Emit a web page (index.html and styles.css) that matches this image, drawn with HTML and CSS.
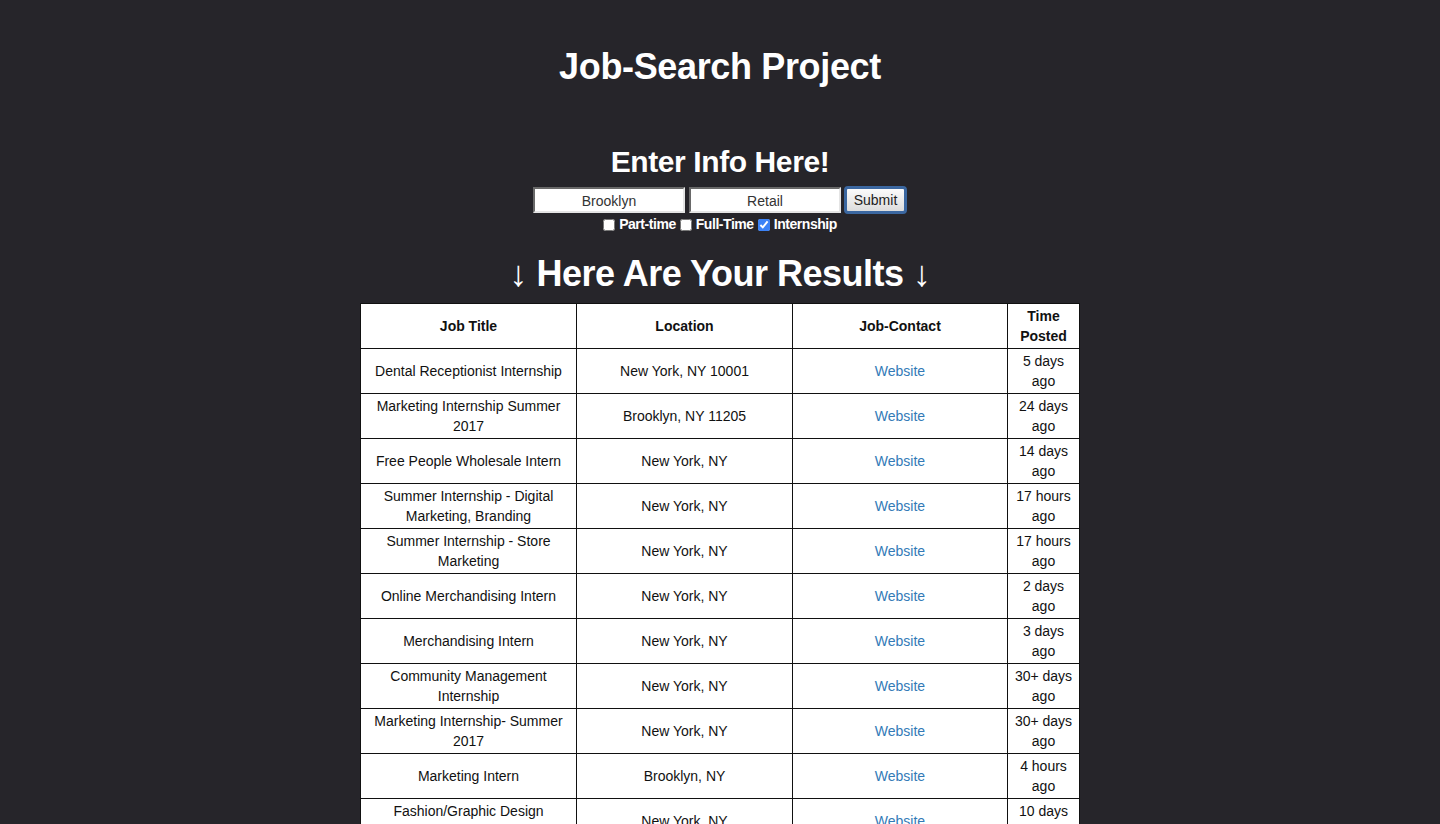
FILE: index.html
```html
<!DOCTYPE html>
<html lang="en">
<head>
<meta charset="utf-8">
<title>Job-Search Project</title>
<link rel="stylesheet" href="styles.css">
</head>
<body>
<main class="page">
  <h1 class="title">Job-Search Project</h1>
  <h2 class="subtitle">Enter Info Here!</h2>
  <form class="search">
    <div class="fields">
      <input class="field" type="text" value="Brooklyn">
      <input class="field" type="text" value="Retail">
      <button class="submit" type="button">Submit</button>
    </div>
    <div class="checks">
      <label class="check"><input type="checkbox">Part-time</label>
      <label class="check"><input type="checkbox">Full-Time</label>
      <label class="check"><input type="checkbox" checked>Internship</label>
    </div>
  </form>
  <h1 class="results-title">↓ Here Are Your Results ↓</h1>
  <table class="results">
    <colgroup>
      <col class="c-title"><col class="c-loc"><col class="c-contact"><col class="c-time">
    </colgroup>
    <thead>
      <tr><th>Job Title</th><th>Location</th><th>Job-Contact</th><th>Time Posted</th></tr>
    </thead>
    <tbody>
      <tr><td>Dental Receptionist Internship</td><td>New York, NY 10001</td><td><a href="#">Website</a></td><td>5 days ago</td></tr>
      <tr><td>Marketing Internship Summer 2017</td><td>Brooklyn, NY 11205</td><td><a href="#">Website</a></td><td>24 days ago</td></tr>
      <tr><td>Free People Wholesale Intern</td><td>New York, NY</td><td><a href="#">Website</a></td><td>14 days ago</td></tr>
      <tr><td>Summer Internship - Digital Marketing, Branding</td><td>New York, NY</td><td><a href="#">Website</a></td><td>17 hours ago</td></tr>
      <tr><td>Summer Internship - Store Marketing</td><td>New York, NY</td><td><a href="#">Website</a></td><td>17 hours ago</td></tr>
      <tr><td>Online Merchandising Intern</td><td>New York, NY</td><td><a href="#">Website</a></td><td>2 days ago</td></tr>
      <tr><td>Merchandising Intern</td><td>New York, NY</td><td><a href="#">Website</a></td><td>3 days ago</td></tr>
      <tr><td>Community Management Internship</td><td>New York, NY</td><td><a href="#">Website</a></td><td>30+ days ago</td></tr>
      <tr><td>Marketing Internship- Summer 2017</td><td>New York, NY</td><td><a href="#">Website</a></td><td>30+ days ago</td></tr>
      <tr><td>Marketing Intern</td><td>Brooklyn, NY</td><td><a href="#">Website</a></td><td>4 hours ago</td></tr>
      <tr class="tall"><td>Fashion/Graphic Design Internship (Summer 2017)</td><td>New York, NY</td><td><a href="#">Website</a></td><td>10 days ago</td></tr>
      <tr><td>Retail Marketing Intern</td><td>Brooklyn, NY</td><td><a href="#">Website</a></td><td>6 days ago</td></tr>
    </tbody>
  </table>
</main>
</body>
</html>
```

FILE: styles.css
```css
html, body {
  margin: 0;
  padding: 0;
  background: #26252a;
}

body {
  font-family: "Liberation Sans", Arial, Helvetica, sans-serif;
  font-size: 14px;
  line-height: 20px;
  color: #111;
}

.page {
  display: flex;
  flex-direction: column;
  align-items: center;
  padding-top: 47px;
}

.title {
  margin: 0;
  font-size: 36px;
  line-height: 40px;
  font-weight: bold;
  letter-spacing: -0.35px;
  color: #fff;
}

.subtitle {
  margin: 58px 0 0;
  font-size: 30px;
  line-height: 34px;
  font-weight: bold;
  letter-spacing: -0.4px;
  color: #fff;
}

.search {
  display: flex;
  flex-direction: column;
  align-items: center;
  margin-top: 7px;
}

.fields {
  display: flex;
  align-items: center;
  gap: 4px;
}

.field {
  box-sizing: border-box;
  width: 152px;
  height: 26px;
  margin: 0;
  padding: 1px 4px 0;
  border: 2px inset #e4e4e4;
  border-top-color: #bdbdbd;
  border-left-color: #bdbdbd;
  background: #fff;
  font-family: "Liberation Sans", Arial, sans-serif;
  font-size: 14px;
  color: #333;
  text-align: center;
}

.submit {
  box-sizing: border-box;
  width: 63px;
  height: 28px;
  margin-left: -1px;
  padding: 0;
  border: 3px solid #3b67a0;
  border-radius: 4px;
  background: linear-gradient(#fbfbfb, #dcdcdc);
  font-family: "Liberation Sans", Arial, sans-serif;
  font-size: 14px;
  color: #222;
}

.checks {
  display: flex;
  gap: 4px;
  height: 20px;
}

.check {
  display: flex;
  align-items: center;
  font-weight: bold;
  letter-spacing: -0.45px;
  color: #fff;
}

.check input {
  width: 12px;
  height: 12px;
  margin: 1px 4px 0 0;
  accent-color: #3b82f6;
}

.results-title {
  margin: 20px 0 0;
  font-size: 36px;
  line-height: 40px;
  font-weight: bold;
  letter-spacing: -0.5px;
  color: #fff;
}

.results {
  margin-top: 9px;
  width: 719px;
  table-layout: fixed;
  border-collapse: collapse;
  background: #fff;
}

.c-title { width: 216px; }
.c-loc { width: 216px; }
.c-contact { width: 215px; }
.c-time { width: 72px; }

.results th,
.results td {
  border: 1px solid #111;
  padding: 2px 4px;
  text-align: center;
  vertical-align: middle;
}

.results th {
  font-weight: bold;
}

.results td:first-child {
  padding: 2px 8px;
}

.results a {
  color: #337ab7;
  text-decoration: none;
}

.results .tall td {
  vertical-align: top;
}

.results .tall td:nth-child(2),
.results .tall td:nth-child(3) {
  vertical-align: middle;
}
```
